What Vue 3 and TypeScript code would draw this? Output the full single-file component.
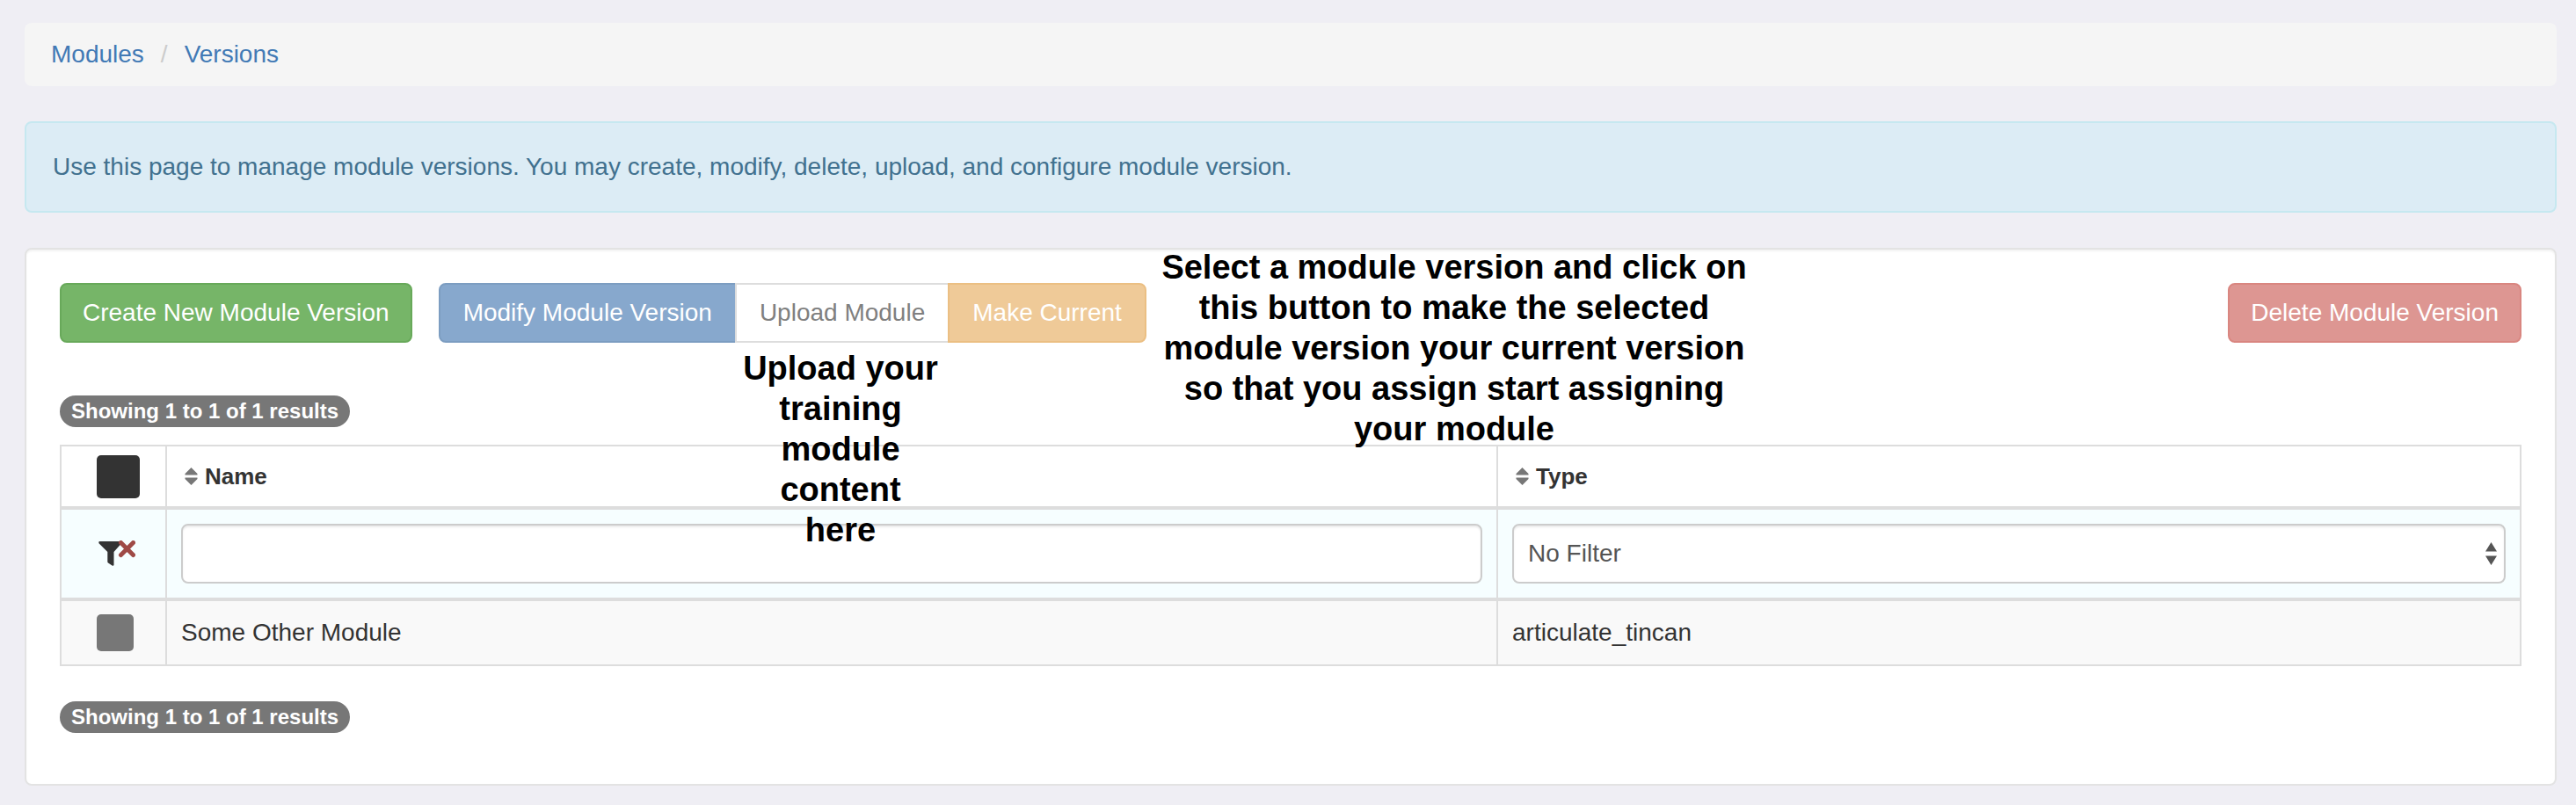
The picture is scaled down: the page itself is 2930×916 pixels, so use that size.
<script setup lang="ts">
import { ref } from 'vue'

interface ModuleVersion {
  name: string
  type: string
}

const versions: ModuleVersion[] = [{ name: 'Some Other Module', type: 'articulate_tincan' }]
const summary = `Showing 1 to ${versions.length} of ${versions.length} results`
const nameFilter = ref('')
const typeFilter = ref('none')
</script>

<template>
  <main class="page">
    <nav class="breadcrumb" aria-label="Breadcrumb">
      <a href="#modules">Modules</a>
      <span class="slash">/</span>
      <a href="#versions">Versions</a>
    </nav>

    <p class="alert">
      Use this page to manage module versions. You may create, modify, delete, upload, and configure module version.
    </p>

    <section class="panel">
      <div class="toolbar">
        <button type="button" class="btn create">Create New Module Version</button>
        <div class="group">
          <button type="button" class="btn modify">Modify Module Version</button>
          <button type="button" class="btn upload">Upload Module</button>
          <button type="button" class="btn current">Make Current</button>
        </div>
        <button type="button" class="btn delete">Delete Module Version</button>

        <p class="note note-upload">Upload your training module content here</p>
        <p class="note note-current">
          Select a module version and click on this button to make the selected module version your current version so
          that you assign start assigning your module
        </p>
      </div>

      <div class="badge">{{ summary }}</div>

      <table class="grid">
        <colgroup>
          <col class="col-check" />
          <col />
          <col class="col-type" />
        </colgroup>
        <thead>
          <tr>
            <th class="check-cell"><input type="checkbox" class="check check-all" aria-label="Select all" /></th>
            <th v-for="label in ['Name', 'Type']" :key="label" class="head" scope="col">
              <span class="head-label">
                <svg class="sort" viewBox="0 0 14 20" aria-hidden="true">
                  <path d="M7 0 14 7v1.500H0V7zM0 11.500h14V13l-7 7-7-7z" />
                </svg>
                {{ label }}
              </span>
            </th>
          </tr>
          <tr class="filters">
            <td class="check-cell">
              <button type="button" class="clear" aria-label="Clear filters">
                <svg viewBox="0 0 42 29" aria-hidden="true">
                  <path
                    class="funnel"
                    d="M1.500 1H26V3.500L17.500 13V28Q17 29.300 15.500 28.500L11 25.500Q10.300 25 10.300 24V13L.5 3.200Q-.2 1 1.500 1Z"
                  />
                  <path class="cross" d="M25.500 2.500 39.500 16.500M39.500 2.500 25.500 16.500" />
                </svg>
              </button>
            </td>
            <td><input v-model="nameFilter" type="text" class="control" aria-label="Filter by name" /></td>
            <td>
              <div class="select">
                <select v-model="typeFilter" class="control" aria-label="Filter by type">
                  <option value="none">No Filter</option>
                  <option value="articulate_tincan">articulate_tincan</option>
                </select>
                <svg class="arrows" viewBox="0 0 13 26" aria-hidden="true">
                  <path d="M6.500 0 13 10.500H0zM0 15.500h13L6.500 26z" />
                </svg>
              </div>
            </td>
          </tr>
        </thead>
        <tbody>
          <tr v-for="version in versions" :key="version.name">
            <td class="check-cell">
              <input type="checkbox" class="check" :aria-label="`Select ${version.name}`" />
            </td>
            <td>{{ version.name }}</td>
            <td>{{ version.type }}</td>
          </tr>
        </tbody>
      </table>

      <div class="badge">{{ summary }}</div>
    </section>
  </main>
</template>

<style>
body {
  margin: 0;
  background: #efeef4;
}
</style>

<style scoped>
.page {
  box-sizing: border-box;
  padding: 26px 22px 22px 28px;
  display: flex;
  flex-direction: column;
  gap: 40px;
  font: 28px/40px 'Liberation Sans', Arial, sans-serif;
  color: #333;
}
.page * {
  box-sizing: border-box;
}
.breadcrumb {
  display: flex;
  gap: 16px;
  padding: 16px 30px;
  border-radius: 8px;
  background: #f5f5f5;
}
.breadcrumb a {
  color: #427ab5;
  text-decoration: none;
}
.slash {
  padding: 0 3px;
  color: #ccc;
}
.alert {
  margin: 0;
  padding: 30px;
  border: 2px solid #c6e8f0;
  border-radius: 8px;
  background: #dcecf5;
  color: #41718f;
}
.panel {
  padding: 38px 38px 58px;
  border: 2px solid #e3e3e3;
  border-radius: 8px;
  background: #fff;
  box-shadow: inset 0 2px 2px rgba(0, 0, 0, 0.05);
}
.toolbar {
  position: relative;
  display: flex;
  margin-bottom: 60px;
}
.group {
  display: flex;
  margin: 0 auto 0 30px;
}
.btn {
  padding: 12px 24px;
  border: 2px solid;
  border-radius: 8px;
  font: inherit;
  white-space: nowrap;
  color: #fff;
}
.group .btn {
  padding: 12px 26px;
  border-radius: 0;
}
.group .btn + .btn {
  margin-left: -2px;
}
.group .btn:first-child {
  border-radius: 8px 0 0 8px;
}
.group .btn:last-of-type {
  border-radius: 0 8px 8px 0;
}
.create {
  background: #76b568;
  border-color: #68a95a;
}
.modify {
  background: #87a8cd;
  border-color: #7c9dc1;
}
.upload {
  background: #fff;
  border-color: #ddd;
  color: #808080;
}
.current {
  background: #efca98;
  border-color: #ebbf83;
}
.delete {
  background: #dd9692;
  border-color: #d98680;
}
.note {
  position: absolute;
  margin: 0;
  font-size: 38px;
  line-height: 46px;
  font-weight: bold;
  text-align: center;
  color: #000;
  pointer-events: none;
}
.note-upload {
  top: 74px;
  left: 776px;
  width: 224px;
}
.note-current {
  top: -41px;
  left: 1241px;
  width: 690px;
}
.badge {
  width: fit-content;
  padding: 6px 13px;
  border-radius: 20px;
  background: #777;
  color: #fff;
  font-size: 24px;
  line-height: 24px;
  font-weight: bold;
}
.grid {
  width: 100%;
  margin: 20px 0 40px;
  table-layout: fixed;
  border-spacing: 0;
  border-top: 2px solid #ddd;
  border-left: 2px solid #ddd;
}
.col-check {
  width: 120px;
}
.col-type {
  width: 41.6%;
}
.grid th,
.grid td {
  padding: 16px;
  border-right: 2px solid #ddd;
  border-bottom: 2px solid #ddd;
  text-align: left;
  vertical-align: middle;
}
.grid thead th,
.grid thead td {
  border-bottom-width: 4px;
}
.grid .head {
  padding: 14px 20px;
  font-size: 26px;
}
.head-label {
  display: flex;
  align-items: center;
  gap: 8px;
}
.sort {
  width: 15px;
  height: 20px;
  fill: #777;
}
.grid .check-cell {
  padding: 0 0 0 40px;
}
.check {
  appearance: none;
  display: block;
  width: 42px;
  height: 42px;
  margin: 0;
  border-radius: 5px;
  background: #777;
}
.check-all {
  width: 49px;
  height: 49px;
  background: #333;
}
.filters td {
  background: #f6feff;
}
.clear {
  display: block;
  padding: 0 2px 2px;
  border: 0;
  background: none;
}
.clear svg {
  display: block;
  width: 42px;
  height: 29px;
}
.funnel {
  fill: #333;
}
.cross {
  fill: none;
  stroke: #9f4a46;
  stroke-width: 5;
  stroke-linecap: round;
}
.control {
  appearance: none;
  display: block;
  width: 100%;
  height: 68px;
  padding: 0 16px;
  border: 2px solid #ccc;
  border-radius: 8px;
  background: #fff;
  box-shadow: inset 0 2px 2px rgba(0, 0, 0, 0.075);
  font: inherit;
  color: #555;
}
.select {
  position: relative;
}
.arrows {
  position: absolute;
  top: 21px;
  right: 10px;
  width: 13px;
  height: 26px;
  fill: #555;
  pointer-events: none;
}
.grid tbody td {
  background: #f9f9f9;
}
</style>
